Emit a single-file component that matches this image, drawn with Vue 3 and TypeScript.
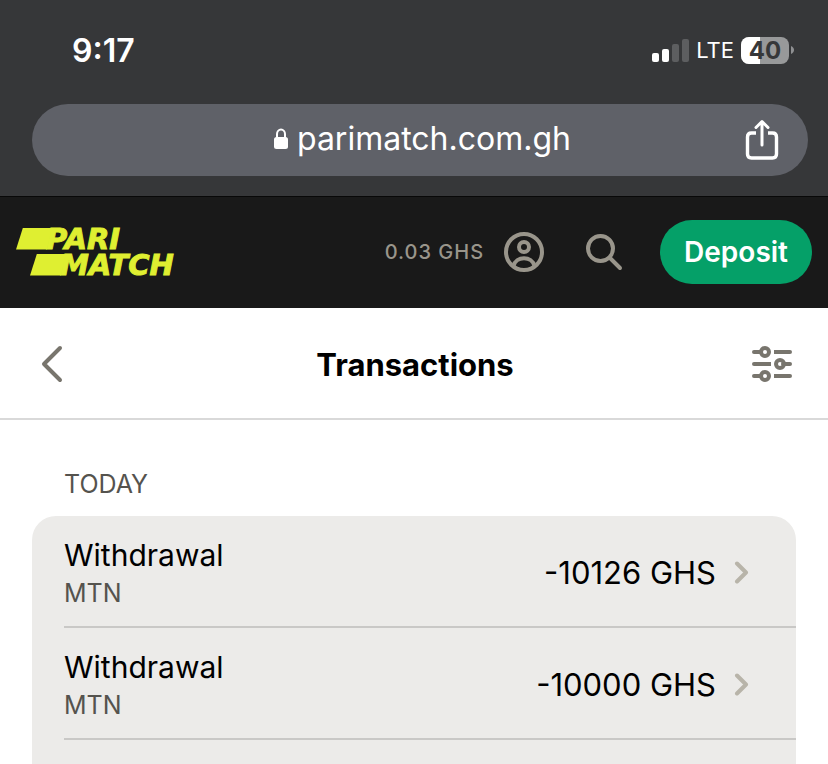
<script setup lang="ts">
import { ref } from 'vue'

interface Transaction {
  id: number
  kind: string
  provider: string
  amount: string
}

const host = 'parimatch.com.gh'
const balance = '0.03 GHS'
const battery = ref(40)
const signal: { height: number; on: boolean }[] = [
  { height: 9, on: true },
  { height: 13, on: true },
  { height: 18, on: false },
  { height: 23, on: false },
]
const transactions: Transaction[] = [
  { id: 1, kind: 'Withdrawal', provider: 'MTN', amount: '-10126 GHS' },
  { id: 2, kind: 'Withdrawal', provider: 'MTN', amount: '-10000 GHS' },
]
</script>

<template>
  <div class="page">
    <div class="browser">
      <div class="status">
        <time class="clock">9:17</time>
        <div class="indicators">
          <div class="signal">
            <span
              v-for="bar in signal"
              :key="bar.height"
              class="bar"
              :class="{ on: bar.on }"
              :style="{ height: bar.height + 'px' }"
            ></span>
          </div>
          <span class="network">LTE</span>
          <div class="battery">
            <div class="cell">
              <span class="charge" :style="{ width: battery + '%' }"></span>
              <span class="level">{{ battery }}</span>
            </div>
            <svg width="3" height="8" viewBox="0 0 3 8"><path d="M0 0C4 1.5 4 6.500 0 8Z" fill="#8f9092" /></svg>
          </div>
        </div>
      </div>
      <div class="address">
        <div class="host">
          <svg width="16" height="22" viewBox="0 0 16 22">
            <rect x="1" y="9" width="14" height="12" rx="2.500" fill="#fff" />
            <path d="M4 10V6a4 4.500 0 0 1 8 0v4" fill="none" stroke="#fff" stroke-width="2" />
          </svg>
          <span>{{ host }}</span>
        </div>
        <button class="icon share" type="button" aria-label="Share">
          <svg width="36" height="44" viewBox="0 0 36 44" fill="none" stroke="#fff" stroke-width="3.400" stroke-linecap="round" stroke-linejoin="round">
            <path d="M12 15H7.500Q3.500 15 3.500 19V36Q3.500 40 7.500 40H28.500Q32.500 40 32.500 36V19Q32.500 15 28.500 15H24" stroke-linecap="butt" />
            <path d="M18 27V4M12 9.500L18 3.500L24 9.500" stroke-width="3" />
          </svg>
        </button>
      </div>
    </div>

    <header class="site">
      <a class="logo" href="#" aria-label="Parimatch">
        <span class="mark"><i class="block"></i><span>PARI</span></span>
        <span class="mark lower"><i class="block"></i><span>MATCH</span></span>
      </a>
      <div class="account">
        <span class="balance">{{ balance }}</span>
        <button class="icon profile" type="button" aria-label="Profile">
          <svg width="40" height="40" viewBox="0 0 40 40" fill="none" stroke="#99958b" stroke-width="4">
            <circle cx="20" cy="20" r="18" />
            <circle cx="20" cy="15" r="5" />
            <path d="M9.500 34C12 23.500 28 23.500 30.500 34" />
          </svg>
        </button>
        <button class="icon search" type="button" aria-label="Search">
          <svg width="38" height="38" viewBox="0 0 38 38" fill="none" stroke="#99958b" stroke-width="4" stroke-linecap="round">
            <circle cx="15.500" cy="15.500" r="12.500" />
            <path d="M24.500 24.500L35 35" />
          </svg>
        </button>
        <button class="deposit" type="button">Deposit</button>
      </div>
    </header>

    <div class="heading">
      <button class="icon back" type="button" aria-label="Back">
        <svg width="24" height="40" viewBox="0 0 24 40" fill="none" stroke="#78756d" stroke-width="4" stroke-linecap="round" stroke-linejoin="round">
          <path d="M20 4L4 20L20 36" />
        </svg>
      </button>
      <h1>Transactions</h1>
      <button class="icon filter" type="button" aria-label="Filter">
        <svg width="40" height="36" viewBox="0 0 40 36" fill="none" stroke="#78756d" stroke-width="4">
          <path d="M2 6H9M2 30H9M31 18H38" stroke-linecap="round" />
          <path d="M22 6H38M3 18H19M22 30H38" />
          <path d="M37 6H38M2 18H3M37 30H38" stroke-linecap="round" />
          <circle cx="13" cy="6" r="4" />
          <circle cx="28" cy="18" r="4" />
          <circle cx="13" cy="30" r="4" />
        </svg>
      </button>
    </div>

    <main class="history">
      <h2>TODAY</h2>
      <ul class="list">
        <li v-for="item in transactions" :key="item.id">
          <a class="row" href="#">
            <span class="detail">
              <span class="kind">{{ item.kind }}</span>
              <span class="provider">{{ item.provider }}</span>
            </span>
            <span class="amount">{{ item.amount }}</span>
            <svg width="16" height="24" viewBox="0 0 16 24" fill="none" stroke="#b8b4a9" stroke-width="4" stroke-linecap="round" stroke-linejoin="round">
              <path d="M3 2.500L12 11.500L3 20.500" />
            </svg>
          </a>
        </li>
      </ul>
    </main>
  </div>
</template>

<style>
body {
  margin: 0;
  background: #fff;
}
</style>

<style scoped>
.page {
  display: flex;
  flex-direction: column;
  min-height: 100vh;
  font-family: Inter, "Liberation Sans", sans-serif;
  color: #000;
}

svg {
  display: block;
  flex: none;
}

a {
  color: inherit;
  text-decoration: none;
}

.icon {
  padding: 0;
  border: 0;
  background: none;
}

.browser {
  padding: 0 20px 20px 32px;
  background: #363739;
  color: #fff;
}

.status {
  display: flex;
  align-items: center;
  justify-content: space-between;
  height: 104px;
  padding: 0 14px 4px 40px;
  box-sizing: border-box;
}

.clock {
  font-size: 32px;
  font-weight: 600;
}

.indicators,
.signal,
.battery {
  display: flex;
  align-items: center;
}

.indicators {
  gap: 7px;
}

.signal {
  align-items: flex-end;
  gap: 3px;
}

.bar {
  width: 7px;
  border-radius: 2px;
  background: #5d5e60;
}

.bar.on {
  background: #fff;
}

.network {
  font-size: 22px;
  font-weight: 400;
}

.battery {
  gap: 2px;
}

.cell {
  display: grid;
  width: 48px;
  height: 27px;
  overflow: hidden;
  border-radius: 8px;
  background: #98999a;
}

.charge,
.level {
  grid-area: 1 / 1;
}

.charge {
  background: #fff;
}

.level {
  color: #363739;
  font-size: 24px;
  font-weight: 700;
  line-height: 27px;
  text-align: center;
}

.address {
  display: grid;
  grid-template-columns: 1fr auto 1fr;
  align-items: center;
  height: 72px;
  padding: 0 28px 0 32px;
  border-radius: 36px;
  background: #5f6168;
}

.host {
  display: flex;
  grid-column: 2;
  align-items: center;
  gap: 8px;
  padding-bottom: 2px;
  font-size: 32px;
  line-height: 40px;
}

.share {
  justify-self: end;
}

.site {
  display: flex;
  align-items: center;
  justify-content: space-between;
  height: 112px;
  padding: 0 16px 2px;
  box-sizing: border-box;
  border-top: 1px solid #080808;
  background: #191919;
}

.logo {
  display: flex;
  flex-direction: column;
  color: #dfef31;
  font-family: "DejaVu Sans", Inter, sans-serif;
  font-size: 29px;
  font-style: italic;
  font-weight: 700;
  line-height: 26px;
  -webkit-text-stroke: 1px #dfef31;
}

.mark {
  display: flex;
  align-items: center;
}

.lower {
  padding-left: 14px;
}

.block {
  width: 36px;
  height: 22px;
  margin-right: -6px;
  background: #dfef31;
  clip-path: polygon(7px 0, 100% 0, 31px 100%, 0 100%);
}

.account {
  display: flex;
  align-items: center;
}

.balance {
  margin-right: 20px;
  color: #99958b;
  font-size: 20px;
  font-weight: 500;
  letter-spacing: 1px;
}

.profile {
  margin-right: 41px;
}

.search {
  margin-right: 37px;
}

.deposit {
  height: 64px;
  padding: 0 24px;
  border: 0;
  border-radius: 32px;
  background: #05a068;
  color: #fff;
  font-family: inherit;
  font-size: 28px;
  font-weight: 600;
}

.heading {
  display: grid;
  grid-template-columns: 1fr auto 1fr;
  align-items: center;
  height: 112px;
  padding: 2px 38px 0;
  box-sizing: border-box;
  padding-right: 36px;
  border-bottom: 2px solid #d9d9d9;
}

h1 {
  margin: 0;
  font-size: 31px;
  font-weight: 700;
}

.back {
  justify-self: start;
  padding-left: 2px;
}

.filter {
  justify-self: end;
}

.history {
  display: flex;
  flex: 1;
  flex-direction: column;
  padding: 48px 32px 0;
}

h2 {
  margin: 0 0 16px;
  padding-left: 32px;
  color: #55534e;
  font-size: 25px;
  font-weight: 400;
  line-height: 32px;
}

.list {
  flex: 1;
  margin: 0;
  padding: 0 0 24px 32px;
  border-radius: 24px 24px 0 0;
  background: #ecebe9;
  list-style: none;
}

.row {
  display: flex;
  align-items: center;
  height: 112px;
  padding: 3px 46px 0 0;
  box-sizing: border-box;
  border-bottom: 2px solid #c9c8c6;
}

.detail {
  display: flex;
  flex: 1;
  flex-direction: column;
}

.kind {
  font-size: 30px;
  line-height: 40px;
}

.amount {
  margin-right: 18px;
  font-size: 31px;
  line-height: 36px;
}

.provider {
  color: #55534e;
  font-size: 25px;
  line-height: 36px;
}
</style>
